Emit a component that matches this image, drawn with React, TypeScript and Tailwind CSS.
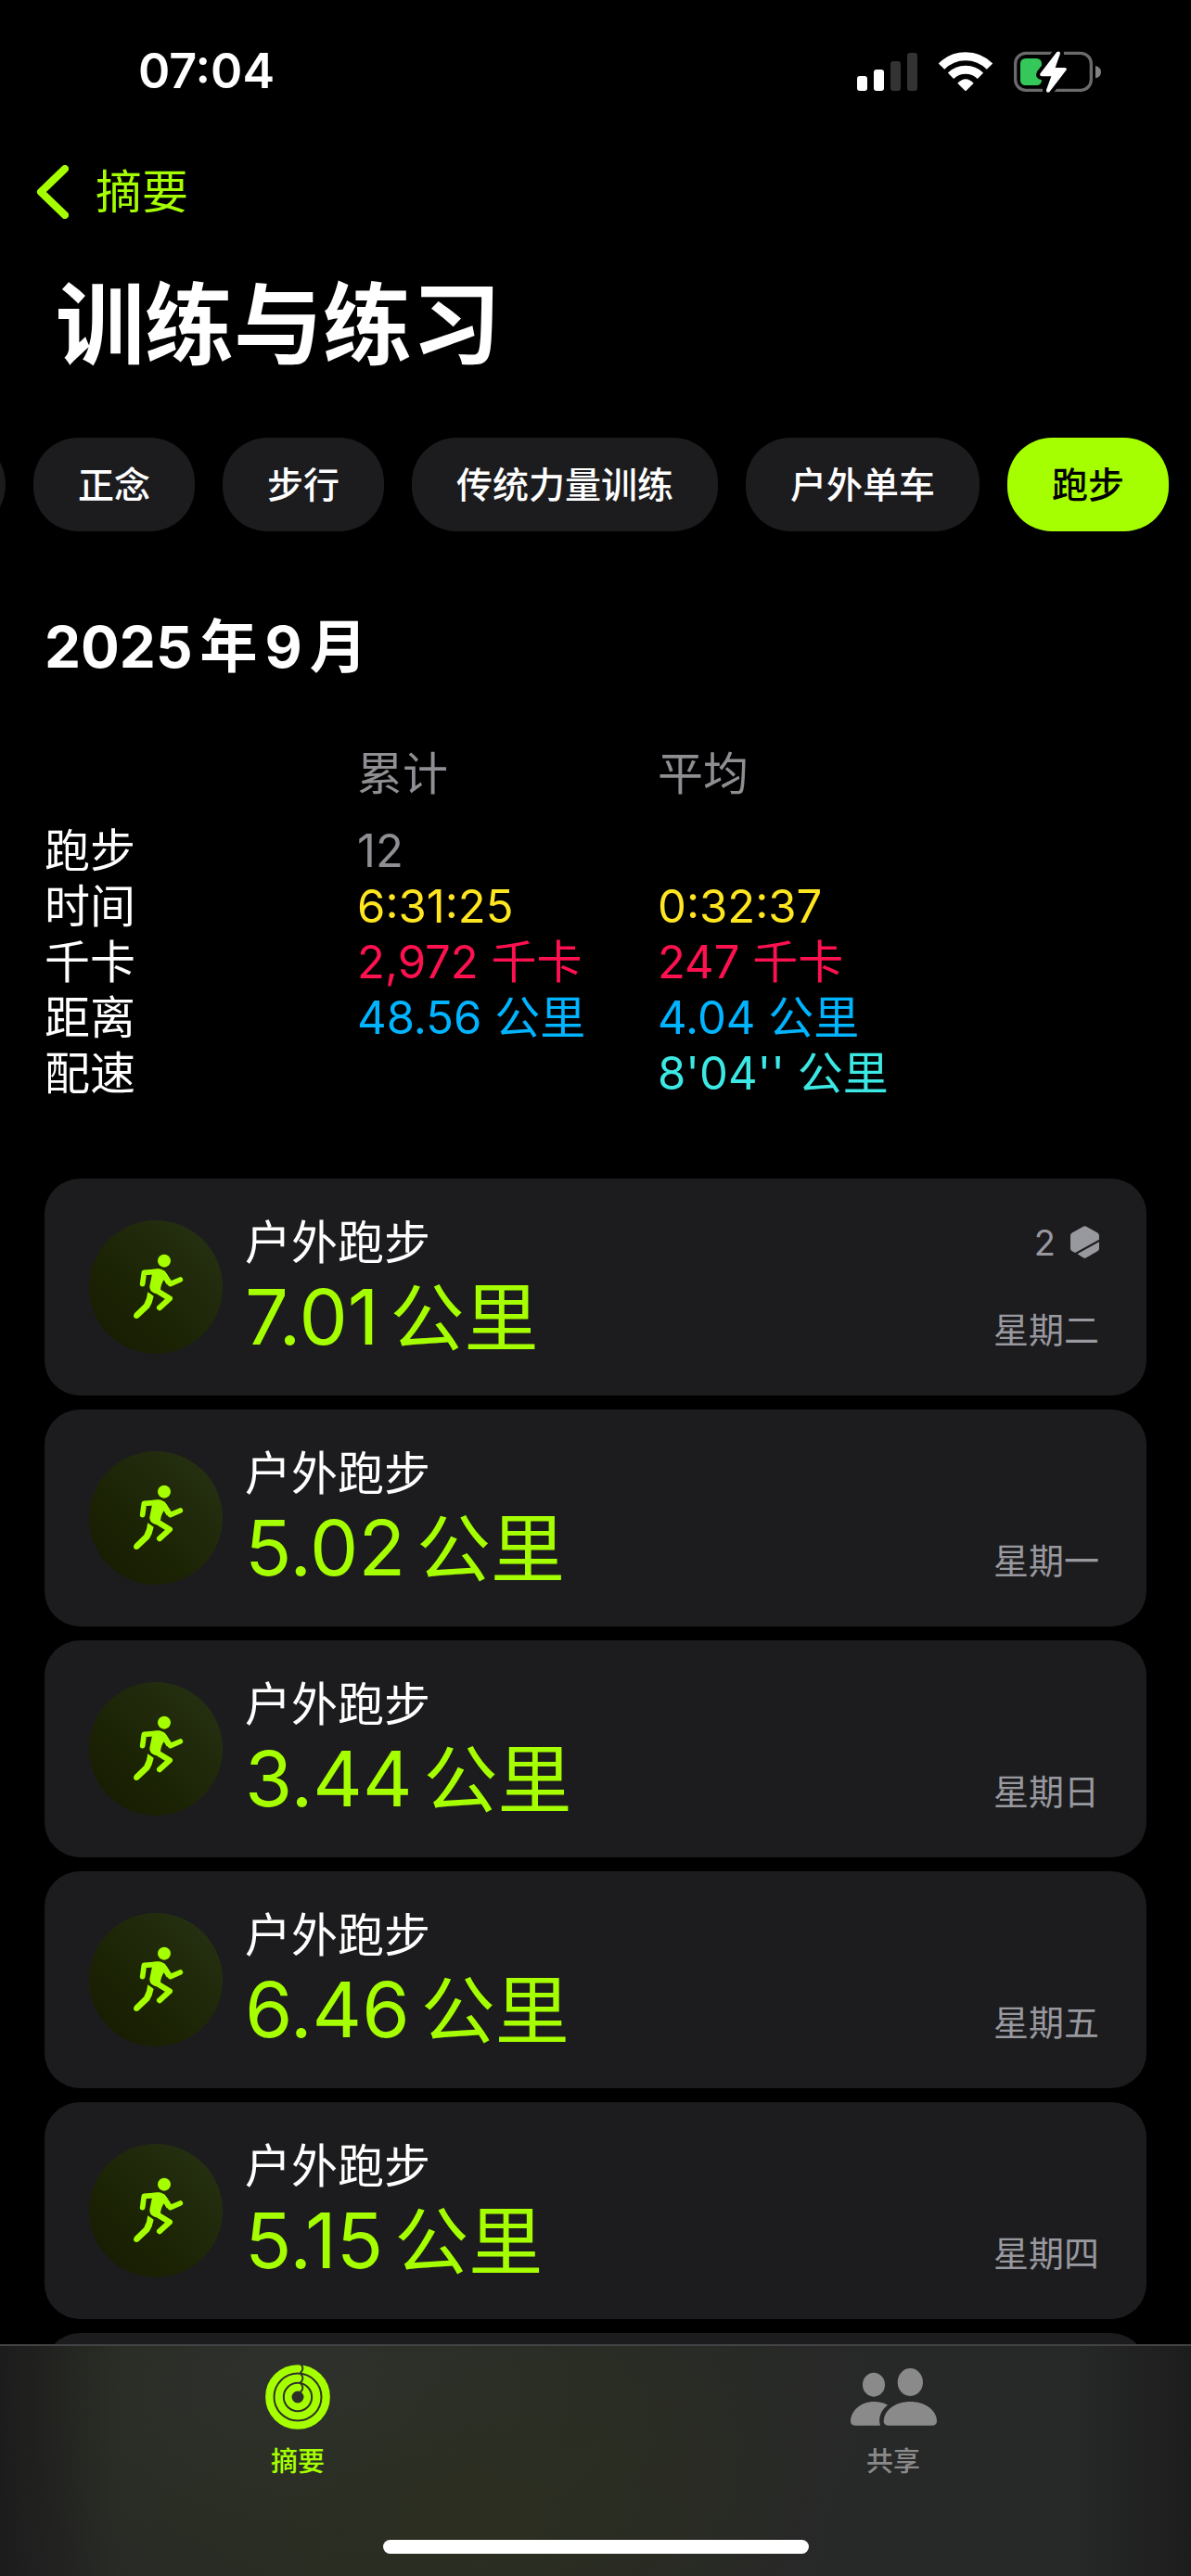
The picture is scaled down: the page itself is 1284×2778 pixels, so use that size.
import { useState } from 'react';
import clsx from 'clsx';

type Stat = {
  label: string;
  total?: string;
  average?: string;
  color: string;
};

type Workout = {
  id: number;
  distance: string;
  day: string;
  awards?: number;
};

const CATEGORIES = ['正念', '步行', '传统力量训练', '户外单车', '跑步'];

const STATS: Stat[] = [
  { label: '跑步', total: '12', color: 'text-[#8e8e93]' },
  { label: '时间', total: '6:31:25', average: '0:32:37', color: 'text-[#ffe620]' },
  { label: '千卡', total: '2,972 千卡', average: '247 千卡', color: 'text-[#ff1150]' },
  { label: '距离', total: '48.56 公里', average: '4.04 公里', color: 'text-[#00b4ff]' },
  { label: '配速', average: "8'04'' 公里", color: 'text-[#3ce8e4]' },
];

const WORKOUTS: Workout[] = [
  { id: 1, distance: '7.01', day: '星期二', awards: 2 },
  { id: 2, distance: '5.02', day: '星期一' },
  { id: 3, distance: '3.44', day: '星期日' },
  { id: 4, distance: '6.46', day: '星期五' },
  { id: 5, distance: '5.15', day: '星期四' },
];

function SignalIcon() {
  return (
    <svg className="w-[65px] h-[41px]" viewBox="0 0 195 123" aria-hidden="true">
      <rect x="0" y="75" width="33" height="48" rx="9" fill="#fff" />
      <rect x="54" y="54" width="33" height="69" rx="9" fill="#fff" />
      <rect x="108" y="27" width="33" height="96" rx="9" fill="#333" />
      <rect x="162" y="0" width="33" height="123" rx="9" fill="#333" />
    </svg>
  );
}

function WifiIcon() {
  return (
    <svg className="w-[58px] h-[42px]" viewBox="458 102 174 126" aria-hidden="true">
      <g fill="none" stroke="#fff" strokeWidth="27">
        <path d="M467 149A109 109 0 0 1 623 149" />
        <path d="M497 179A69 69 0 0 1 593 179" />
      </g>
      <path d="M519 203Q545 176 571 203L547 227Q545 229 543 227Z" fill="#fff" />
    </svg>
  );
}

function BatteryIcon() {
  return (
    <svg className="w-[94px] h-[45px]" viewBox="699 99 282 135" aria-hidden="true">
      <rect x="704" y="106" width="245" height="120" rx="34" fill="none" stroke="#6a6a6c" strokeWidth="10" />
      <path d="M963 147Q981 152 981 167Q981 182 963 187Z" fill="#828284" />
      <rect x="720" y="123" width="69" height="87" rx="16" fill="#34c759" />
      <path
        d="M838 102L785 171Q780 180 790 181H820L804 225Q803 236 814 232L868 161Q873 154 864 153H833L849 107Q848 97 838 102Z"
        fill="#fff"
        stroke="#000"
        strokeWidth="24"
        paintOrder="stroke"
      />
    </svg>
  );
}

function RunnerIcon() {
  return (
    <svg className="size-36" viewBox="18 17 432 432" aria-hidden="true">
      <g fill="none" stroke="#a6ff00" strokeWidth="17" strokeLinecap="round" strokeLinejoin="round">
        <path d="M191 223L196 186L240 183" />
        <path d="M258 189L281 223L313 209" />
        <path d="M226 238L279 270L246 300" strokeWidth="18" />
      </g>
      <circle cx="261" cy="148" r="21" fill="#a6ff00" />
      <path
        d="M210 177L244 174Q260 176 270 191L280 208L270 226L260 210Q251 222 249 242L232 254Q212 246 214 230L222 190Z"
        fill="#a6ff00"
      />
      <path d="M208 249L227 262Q223 284 213 300L178 333Q170 338 164 332Q160 325 165 318L196 288Q206 270 208 249Z" fill="#a6ff00" />
    </svg>
  );
}

function AwardIcon() {
  return (
    <svg className="w-[31px] h-[35px]" viewBox="459 184 92 104" fill="#98989f" aria-hidden="true">
      <path d="M500 186Q505 183 510 186L546 206Q551 209 551 215V228L474 270L464 265Q459 262 459 256V215Q459 209 464 206Z" />
      <path d="M551 235V256Q551 262 546 265L510 286Q505 289 500 286L481 274Z" />
    </svg>
  );
}

function RingsIcon() {
  return (
    <svg className="size-[70px]" viewBox="77 60 210 210" fill="none" aria-hidden="true">
      <g stroke="#a6ff00">
        <circle cx="182" cy="165" r="92" strokeWidth="25" />
        <circle cx="182" cy="165" r="61" strokeWidth="25" />
        <circle cx="182" cy="165" r="31" strokeWidth="23" />
      </g>
      {/* rounded end of each ring */}
      <g stroke="#2f322c" strokeWidth="6">
        <path d="M191 58Q206 73 190 88" />
        <path d="M191 90Q206 104 190 119" />
        <path d="M191 121Q206 135 190 150" />
      </g>
    </svg>
  );
}

function PeopleIcon() {
  return (
    <svg className="w-[93px] h-[62px]" viewBox="78 72 279 186" fill="#8a8a8a" aria-hidden="true">
      <ellipse cx="153" cy="125" rx="36" ry="39" />
      <ellipse cx="271" cy="117" rx="41" ry="45" />
      <path d="M92 257Q78 256 78 242C80 205 115 180 153 180C172 180 186 184 198 191C178 205 166 230 174 257Z" />
      <path d="M199 257Q185 256 185 242C187 205 225 180 271 180S355 205 357 242Q357 256 343 257Z" />
    </svg>
  );
}

function StatusBar() {
  return (
    <div className="flex h-[154px] shrink-0 items-center justify-between pl-[149px] pr-[97px]">
      <span className="text-[52px] leading-none font-semibold">07:04</span>
      <div className="flex items-center gap-[23px]">
        <SignalIcon />
        <WifiIcon />
        <BatteryIcon />
      </div>
    </div>
  );
}

function WorkoutCard({ workout }: { workout: Workout }) {
  return (
    <li className="flex h-[234px] shrink-0 items-center rounded-[38px] bg-[#1c1c1e] pl-12 pr-[51px]">
      <div className="rounded-full bg-linear-to-tr from-[#151a00] to-[#273314]">
        <RunnerIcon />
      </div>
      <div className="ml-6 flex-1 pt-1">
        <p className="text-[50px] leading-[60px]">户外跑步</p>
        <p className="flex items-baseline gap-3 text-[80px] leading-[100px] text-[#a6ff00]">
          <span className="text-[83px]">{workout.distance}</span>
          <span>公里</span>
        </p>
      </div>
      <div className="flex flex-col items-end gap-[46px] pb-[3px] text-[38px] leading-[48px] text-[#98989f]">
        <div className="flex h-12 items-center gap-4">
          {workout.awards && (
            <>
              <span>{workout.awards}</span>
              <AwardIcon />
            </>
          )}
        </div>
        <span>{workout.day}</span>
      </div>
    </li>
  );
}

function App() {
  const [category, setCategory] = useState('跑步');
  const [tab, setTab] = useState('summary');

  return (
    <div className="flex h-screen flex-col overflow-hidden bg-black font-['Inter','Noto_Sans_CJK_SC',sans-serif] text-white" lang="zh-CN">
      <StatusBar />

      <header className="shrink-0">
        <a href="#summary" className="flex h-[106px] items-center gap-[29px] pl-[39px] text-[50px] leading-none text-[#a6ff00]">
          <svg className="w-[35px] h-[58px]" viewBox="0 0 35 58" fill="none" aria-hidden="true">
            <path d="M31 4L5 29L31 54" stroke="#a6ff00" strokeWidth="8" strokeLinecap="round" strokeLinejoin="round" />
          </svg>
          摘要
        </a>
        <h1 className="pt-1 pl-[60px] text-[96px] leading-[172px] font-bold">训练与练习</h1>
      </header>

      <div className="mt-9 flex shrink-0 justify-end gap-[30px] overflow-hidden pr-6">
        <span className="w-44 shrink-0 rounded-full bg-[#1c1c1e]" />
        {CATEGORIES.map(name => (
          <button
            key={name}
            type="button"
            onClick={() => setCategory(name)}
            className={clsx(
              'h-[101px] shrink-0 rounded-[48px] px-12 text-[39px] leading-none font-medium whitespace-nowrap',
              name === category ? 'bg-[#a6ff00] text-black' : 'bg-[#1c1c1e] text-white'
            )}
          >
            {name}
          </button>
        ))}
      </div>

      <main className="flex min-h-0 flex-1 flex-col overflow-hidden px-12">
        <h2 className="mt-[89px] flex shrink-0 items-baseline gap-2 text-[62px] leading-[72px] font-bold">
          <span>2025</span>
          <span>年</span>
          <span>9</span>
          <span>月</span>
        </h2>

        <table className="mt-[71px] w-full shrink-0 table-fixed text-left text-[49px] leading-[60px]">
          <thead className="text-[#8e8e93]">
            <tr>
              <td className="w-[337px]" />
              <th scope="col" className="w-[324px] pb-[23px] font-normal">累计</th>
              <th scope="col" className="pb-[23px] font-normal">平均</th>
            </tr>
          </thead>
          <tbody>
            {STATS.map(stat => (
              <tr key={stat.label} className={stat.color}>
                <th scope="row" className="h-[60px] font-normal text-white">{stat.label}</th>
                <td>{stat.total}</td>
                <td>{stat.average}</td>
              </tr>
            ))}
          </tbody>
        </table>

        <ul className="mt-[83px] flex flex-col gap-[15px]">
          {WORKOUTS.map(workout => (
            <WorkoutCard key={workout.id} workout={workout} />
          ))}
          <li className="h-[234px] shrink-0 rounded-[38px] bg-[#1c1c1e]" />
        </ul>
      </main>

      <nav className="flex h-[250px] shrink-0 flex-col justify-between border-t-2 border-[#434345] bg-[#272828] bg-[linear-gradient(to_right,#1c1c1c_0%,transparent_10%,transparent_90%,#1d1d1d_100%),radial-gradient(ellipse_30%_90%_at_40%_75%,#2b2e20_0%,transparent_100%),radial-gradient(ellipse_45%_130%_at_28%_20%,#2f322e_0%,#2a2d25_50%,transparent_100%)] pb-6">
        <div className="grid grid-cols-2">
          <button
            type="button"
            onClick={() => setTab('summary')}
            aria-current={tab === 'summary' ? 'page' : undefined}
            className="flex flex-col items-center pt-5 text-[#a6ff00]"
          >
            <RingsIcon />
            <span className="mt-[15px] text-[29px] leading-10 font-medium">摘要</span>
          </button>
          <button
            type="button"
            onClick={() => setTab('sharing')}
            aria-current={tab === 'sharing' ? 'page' : undefined}
            className="flex flex-col items-center pt-6 text-[#8a8a8a]"
          >
            <PeopleIcon />
            <span className="mt-[19px] text-[29px] leading-10 font-medium">共享</span>
          </button>
        </div>
        <div className="mx-auto h-[15px] w-[459px] rounded-full bg-white" />
      </nav>
    </div>
  );
}

export default App;
